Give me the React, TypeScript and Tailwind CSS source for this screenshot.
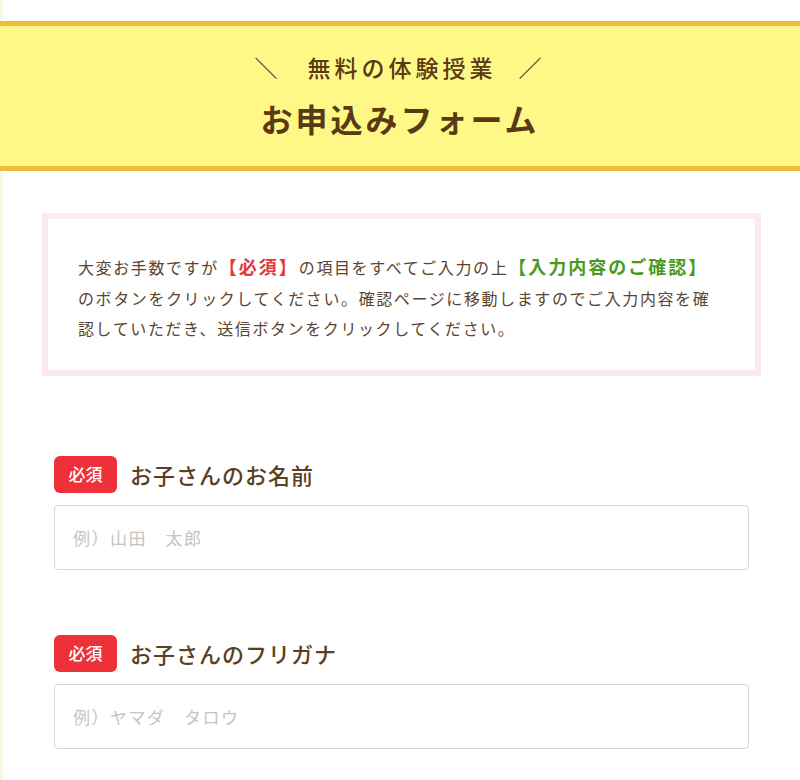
import React from "react";

const jp = { fontFamily: '"Noto Sans CJK JP", "Noto Sans", sans-serif' };

function Field({ label, placeholder }: { label: string; placeholder: string }) {
  return (
    <div className="flex flex-col">
      <div className="flex items-center gap-[13px]">
        <span className="flex h-[37px] w-[63px] items-center justify-center rounded-[6px] bg-[#ee3039] text-[17px] font-medium text-white">
          必須
        </span>
        <span className="text-[22px] font-medium tracking-[1px] text-[#5b3f1f]">{label}</span>
      </div>
      <input
        type="text"
        placeholder={placeholder}
        className="mt-[12px] h-[65px] w-full rounded-[4px] border border-[#d6d6d6] bg-white px-[18px] text-[17px] tracking-[1.5px] text-[#5b3f1f] outline-none placeholder:text-[#c4c4c4]"
        style={jp}
      />
    </div>
  );
}

export default function App() {
  return (
    <div className="min-h-[780px] w-[800px] bg-white" style={jp}>
      <div className="h-[21px] border-l-[3px] border-[#faf6e4]" />
      <header className="flex h-[150px] flex-col items-center justify-center border-y-[5px] border-[#f0bb38] bg-[#fff887] text-[#5a3a14]">
        <div className="flex items-center text-[23px] font-medium tracking-[4px]">
          <span>＼</span>
          <span className="ml-[26px] mr-[22px]">無料の体験授業</span>
          <span>／</span>
        </div>
        <h1 className="mt-[9px] text-[32px] font-bold tracking-[3px]">お申込みフォーム</h1>
      </header>
      <main className="border-l-[3px] border-[#faf6e4] px-[39px] pb-[32px] pt-[42px]">
        <div className="border-[6px] border-[#fdeaeb]">
          <div className="rounded-[5px] bg-white px-[30px] pb-[26px] pt-[32px] text-[16px] leading-[30.5px] tracking-[1.6px] text-[#5b4530]">
            大変お手数ですが<span className="text-[18px] font-bold tracking-[2px] text-[#e3383c]">【必須】</span>の項目をすべてご入力の上<span className="text-[18px] font-bold tracking-[2px] text-[#4c9a1c]">【入力内容のご確認】</span>のボタンをクリックしてください。確認ページに移動しますのでご入力内容を確認していただき、送信ボタンをクリックしてください。
          </div>
        </div>
        <div className="mt-[80px] flex flex-col gap-[65px] px-[12px]">
          <Field label="お子さんのお名前" placeholder="例）山田　太郎" />
          <Field label="お子さんのフリガナ" placeholder="例）ヤマダ　タロウ" />
        </div>
      </main>
    </div>
  );
}
